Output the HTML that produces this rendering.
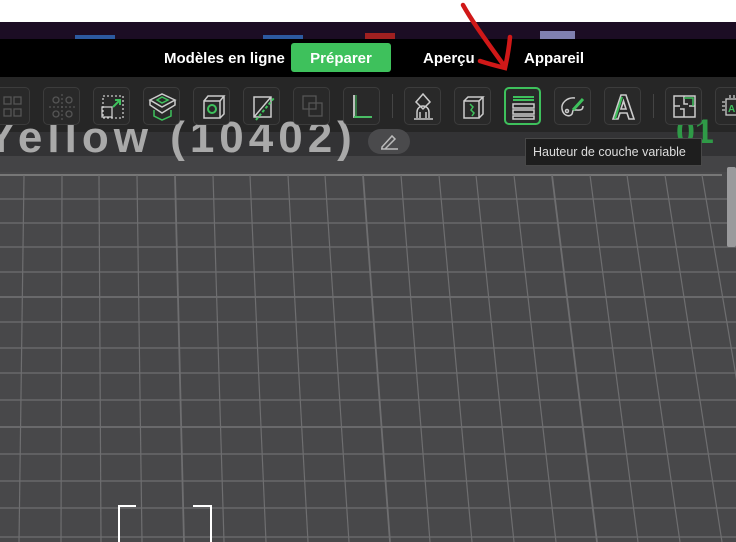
<!DOCTYPE html>
<html><head><meta charset="utf-8"><style>
*{margin:0;padding:0;box-sizing:border-box}
body{width:736px;height:542px;overflow:hidden;background:#48484a;font-family:"Liberation Sans",sans-serif;position:relative}
.abs{position:absolute}
.btn{position:absolute;top:87px;width:37px;height:38px;border:1px solid #3c3c3c;border-radius:5px;background:#292929}
.btn svg{position:absolute;left:0;top:0}
.nav{position:absolute;top:50px;color:#fff;font-size:15px;font-weight:bold}
</style></head><body>
<div class="abs" style="left:0;top:0;width:736px;height:22px;background:#fff"></div>
<div class="abs" style="left:0;top:22px;width:736px;height:17px;background:#1c0d24"></div>
<div class="abs" style="left:75px;top:35px;width:40px;height:4px;background:#2c5aa0"></div>
<div class="abs" style="left:263px;top:35px;width:40px;height:4px;background:#2c5aa0"></div>
<div class="abs" style="left:365px;top:33px;width:30px;height:6px;background:#a02020"></div>
<div class="abs" style="left:540px;top:31px;width:35px;height:8px;background:#8080b0"></div>
<div class="abs" style="left:0;top:39px;width:736px;height:38px;background:#000"></div>
<div class="nav" style="left:164px">Modèles en ligne</div>
<div class="abs" style="left:291px;top:43px;width:100px;height:29px;background:#3ec15c;border-radius:3px;color:#fff;font-weight:bold;font-size:15px;line-height:15px;padding-top:8px;text-align:center">Préparer</div>
<div class="nav" style="left:423px">Aperçu</div>
<div class="nav" style="left:524px">Appareil</div>
<div class="abs" style="left:0;top:77px;width:736px;height:55px;background:#262626"></div>
<div class="abs" style="left:0;top:132px;width:736px;height:24px;background:#333335"></div>
<div class="abs" style="left:0;top:156px;width:736px;height:16px;background:#444446"></div>
<svg class="abs" style="left:0;top:172px" width="736" height="370">
<g stroke="#6e6e70" stroke-width="1.2">
<line x1="0" y1="3" x2="722" y2="3" stroke="#777" stroke-width="2"/>
<line x1="0" y1="27" x2="736" y2="27"/><line x1="0" y1="51" x2="736" y2="51"/><line x1="0" y1="75" x2="736" y2="75"/><line x1="0" y1="100" x2="736" y2="100"/><line x1="0" y1="125" x2="736" y2="125" stroke-width="1.8"/><line x1="0" y1="150" x2="736" y2="150"/><line x1="0" y1="176" x2="736" y2="176"/><line x1="0" y1="201" x2="736" y2="201"/><line x1="0" y1="228" x2="736" y2="228"/><line x1="0" y1="255" x2="736" y2="255" stroke-width="1.8"/><line x1="0" y1="282" x2="736" y2="282"/><line x1="0" y1="309" x2="736" y2="309"/><line x1="0" y1="336" x2="736" y2="336"/><line x1="0" y1="365" x2="736" y2="365"/>
<line x1="24" y1="3" x2="19" y2="370"/><line x1="62" y1="3" x2="61" y2="370"/><line x1="99" y1="3" x2="101" y2="370"/><line x1="137" y1="3" x2="142" y2="370"/><line x1="175" y1="3" x2="184" y2="370" stroke-width="1.8"/><line x1="213" y1="3" x2="224" y2="370"/><line x1="250" y1="3" x2="266" y2="370"/><line x1="288" y1="3" x2="308" y2="370"/><line x1="325" y1="3" x2="349" y2="370"/><line x1="363" y1="3" x2="390" y2="370" stroke-width="1.8"/><line x1="401" y1="3" x2="430" y2="370"/><line x1="439" y1="3" x2="472" y2="370"/><line x1="476" y1="3" x2="514" y2="370"/><line x1="514" y1="3" x2="556" y2="370"/><line x1="552" y1="3" x2="597" y2="370" stroke-width="1.8"/><line x1="590" y1="3" x2="638" y2="370"/><line x1="627" y1="3" x2="680" y2="370"/><line x1="665" y1="3" x2="722" y2="370"/><line x1="702" y1="3" x2="764" y2="370"/>
</g>
<path d="M119 370V334h17M193 334h18v36" stroke="#fff" stroke-width="2" fill="none"/>
</svg>
<div class="abs" style="left:727px;top:167px;width:9px;height:80px;background:#9a9a9c;border-radius:2px"></div>
<div class="abs" style="left:-14px;top:116px;font-size:44px;line-height:1;font-weight:bold;color:#a9a9a9;letter-spacing:5px;white-space:nowrap">Yellow (10402)</div>
<div class="abs" style="left:368px;top:129px;width:42px;height:25px;border-radius:13px;background:#4a4a4c"></div>
<svg class="abs" style="left:378px;top:133px" width="24" height="18"><path d="M4 14L14 3l3 3-10 10H4z M3 16h17" stroke="#bbb" stroke-width="1.5" fill="none"/></svg>
<div class="abs" style="left:676px;top:113px;font-size:34px;font-weight:bold;color:#2f9a47">01</div>

<div class="btn" style="left:-7px"><svg width="37" height="38"><g stroke="#555" fill="none" stroke-width="1.3"><rect x="10" y="9" width="7" height="7"/><rect x="20" y="9" width="7" height="7"/><rect x="10" y="21" width="7" height="7"/><rect x="20" y="21" width="7" height="7"/></g></svg></div>
<div class="btn" style="left:43px"><svg width="37" height="38"><g stroke="#555" fill="none" stroke-width="1.3"><circle cx="12" cy="12" r="3"/><circle cx="25" cy="12" r="3"/><circle cx="12" cy="26" r="3"/><circle cx="25" cy="26" r="3"/><path d="M5 19h27M18 6v26" stroke-dasharray="2 2"/></g></svg></div>
<div class="btn" style="left:93px"><svg width="37" height="38"><g fill="none" stroke-width="1.3"><rect x="9" y="8" width="20" height="22" stroke="#ccc" stroke-dasharray="2 2"/><rect x="8" y="19" width="10" height="10" stroke="#ccc"/><path d="M19 19l7-7M21 12h5v5" stroke="#3ec15c" stroke-width="2"/></g></svg></div>
<div class="btn" style="left:143px"><svg width="37" height="38"><g fill="none" stroke-width="1.5"><path d="M6 12l12-6 13 6-13 7z" stroke="#ccc"/><path d="M6 12v5l12 8 13-8v-5" stroke="#ccc"/><path d="M13 12l5-3 6 3-6 3z" stroke="#3ec15c"/><path d="M10 22v6l8 4 9-4v-6" stroke="#3ec15c"/></g></svg></div>
<div class="btn" style="left:193px"><svg width="37" height="38"><g fill="none" stroke-width="1.5"><path d="M10 13h16v17H10zM10 13l4-5h16l-4 5M26 30l4-4V8" stroke="#ccc"/><circle cx="18" cy="21" r="4" stroke="#3ec15c" stroke-width="2"/></g></svg></div>
<div class="btn" style="left:243px"><svg width="37" height="38"><g fill="none" stroke-width="1.5"><path d="M10 9h17v20H10zM10 29L27 9" stroke="#ccc"/><path d="M12 32l18-22" stroke="#3ec15c" stroke-dasharray="3 2" stroke-width="2"/></g></svg></div>
<div class="btn" style="left:293px"><svg width="37" height="38"><g fill="none" stroke="#555" stroke-width="1.3"><rect x="9" y="8" width="13" height="13"/><rect x="15" y="15" width="13" height="13"/></g></svg></div>
<div class="btn" style="left:343px"><svg width="37" height="38"><g fill="none" stroke-width="1.8"><path d="M10 7v22h18" stroke="#ccc"/><path d="M10 29h18" stroke="#3ec15c"/><path d="M12 7v22" stroke="#3ec15c" stroke-width="1"/></g></svg></div>
<div class="abs" style="left:392px;top:94px;width:1px;height:24px;background:#444"></div>
<div class="btn" style="left:404px"><svg width="37" height="38"><g fill="none" stroke="#ccc" stroke-width="1.5"><path d="M18 6l7 8-7 7-7-7z"/><path d="M12 30v-6a6 6 0 0112 0v6M9 31h19M15 24v6M21 24v6"/></g></svg></div>
<div class="btn" style="left:454px"><svg width="37" height="38"><g fill="none" stroke-width="1.5"><path d="M9 13h15v17H9zM9 13l4-4h15l-4 4M24 30l4-4V9" stroke="#ccc"/><path d="M15 16l3 3-2 3 3 3-2 3" stroke="#3ec15c"/></g></svg></div>
<div class="btn" style="left:504px;border:2px solid #3ec15c"><svg width="35" height="36"><g stroke-width="1.5" fill="none"><path d="M7 8h21M7 11h21" stroke="#3ec15c" stroke-width="2"/><rect x="7" y="15" width="21" height="4" stroke="#ccc"/><rect x="7" y="21" width="21" height="4" stroke="#ccc"/><rect x="7" y="27" width="21" height="3" stroke="#ccc"/></g></svg></div>
<div class="btn" style="left:554px"><svg width="37" height="38"><g fill="none" stroke-width="1.5"><path d="M20 10c-8-1-14 5-13 11s6 8 9 6 0-5 4-5 8 1 8-4" stroke="#ccc"/><circle cx="12" cy="23" r="1.5" stroke="#ccc"/><path d="M18 22l10-11" stroke="#3ec15c" stroke-width="3"/></g></svg></div>
<div class="btn" style="left:604px"><svg width="37" height="38"><g fill="none" stroke-width="1.6"><path d="M8 31L16 7h5l8 24h-5l-2-6h-7l-2 6z" stroke="#ccc"/><path d="M16 21h5l-2.5-8z" stroke="#ccc"/><path d="M10 31l7-22" stroke="#3ec15c" stroke-width="2"/></g></svg></div>
<div class="abs" style="left:653px;top:94px;width:1px;height:24px;background:#444"></div>
<div class="btn" style="left:665px"><svg width="37" height="38"><g fill="none" stroke-width="1.5"><rect x="8" y="8" width="21" height="21" stroke="#ccc"/><path d="M18 8v8h4M18 29v-8h-4M8 18h6M29 18h-6" stroke="#ccc"/><path d="M18 10h9v8" stroke="#3ec15c"/></g></svg></div>
<div class="btn" style="left:715px"><svg width="37" height="38"><g fill="none" stroke-width="1.3"><rect x="10" y="11" width="16" height="16" stroke="#ccc"/><path d="M6 14h3M6 18h3M6 22h3M14 7v3M18 7v3" stroke="#ccc"/><text x="12" y="24" font-size="10" font-weight="bold" fill="#3ec15c" stroke="none" font-family="Liberation Sans">A</text></g></svg></div>

<div class="abs" style="left:525px;top:138px;width:177px;height:28px;background:#1e1e1e;border:1px solid #484848;color:#ddd;font-size:12.5px;line-height:26px;padding-left:7px;white-space:nowrap">Hauteur de couche variable</div>

<svg class="abs" style="left:0;top:0" width="736" height="100"><g fill="none" stroke="#d01818" stroke-width="4.5" stroke-linecap="round"><path d="M463 5c10 18 25 38 42 62"/><path d="M480 61c9 3 17 5 25 7c2-9 4-20 5-31"/></g></svg>
</body></html>
